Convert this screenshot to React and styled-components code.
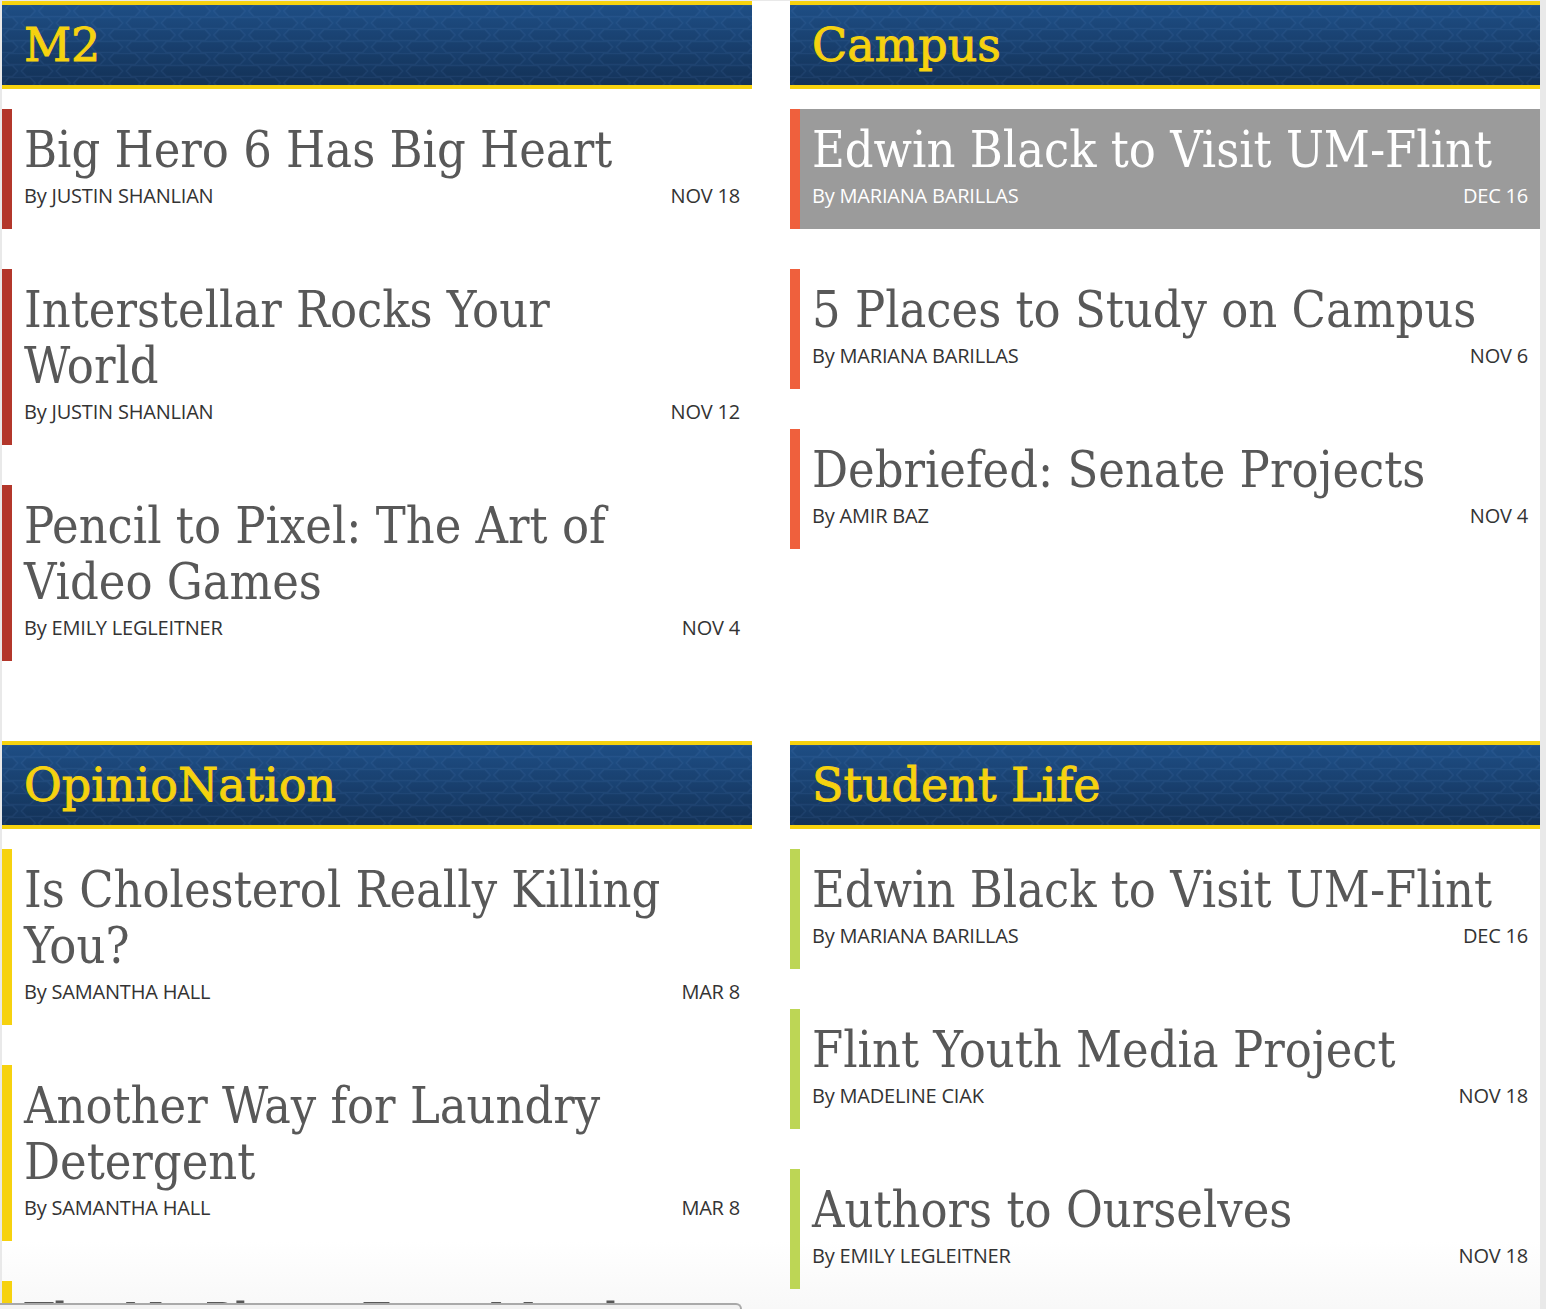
import React from "react"
import styled, { createGlobalStyle } from "styled-components"

const colors = {
  yellow: "#f6d20f",
  blueTop: "#1f518a",
  blueBottom: "#14335a",
  title: "#585858",
  meta: "#333333",
  m2: "#b3372b",
  campus: "#ef603d",
  opinion: "#f6d20f",
  life: "#bdd655",
  highlight: "#9b9b9b",
}

const GlobalStyle = createGlobalStyle`
  html, body {
    margin: 0;
    padding: 0;
    background: #e9e9e9;
  }
  body {
    font-family: "Open Sans", "Liberation Sans", sans-serif;
    overflow: hidden;
  }
`

const Page = styled.main`
  margin: 1px 6px 0 2px;
  display: grid;
  grid-template-columns: 750px 750px;
  align-content: start;
  column-gap: 38px;
  row-gap: 80px;
  background: linear-gradient(#ffffff 0, #ffffff 1240px, #f8f8f8 1308px);
`

const Section = styled.section`
  display: flex;
  flex-direction: column;
  gap: 20px;
`

const Header = styled.header`
  position: relative;
  height: 80px;
  border-top: 4px solid ${colors.yellow};
  border-bottom: 4px solid ${colors.yellow};
  background: linear-gradient(${colors.blueTop}, ${colors.blueBottom});
  display: flex;
  align-items: center;
  padding-left: 22px;
  overflow: hidden;
`

const Pattern = styled.svg`
  position: absolute;
  inset: 0;
  width: 100%;
  height: 100%;
`

const HeaderTitle = styled.h2`
  position: relative;
  margin: 0;
  font-family: "DejaVu Serif", "Liberation Serif", serif;
  font-weight: normal;
  font-size: 46px;
  line-height: 1;
  color: ${colors.yellow};
  -webkit-text-stroke: 0.9px ${colors.yellow};
`

const List = styled.div`
  display: flex;
  flex-direction: column;
  gap: 40px;
`

const Item = styled.article`
  border-left: 10px solid ${(p) => p.$accent};
  background: ${(p) => (p.$active ? colors.highlight : "transparent")};
  padding: 13px 12px 21px 12px;
`

const Title = styled.h3`
  margin: 0;
  white-space: pre-line;
  font-family: "DejaVu Serif", "Liberation Serif", serif;
  font-weight: normal;
  font-stretch: condensed;
  font-size: 50px;
  line-height: 56px;
  color: ${(p) => (p.$active ? "#ffffff" : colors.title)};
`

const Meta = styled.div`
  margin-top: 6px;
  display: flex;
  justify-content: space-between;
  font-family: "Open Sans", "Liberation Sans", sans-serif;
  font-size: 20px;
  line-height: 24px;
  letter-spacing: -0.2px;
  color: ${(p) => (p.$active ? "#ffffff" : colors.meta)};
`

const StatusBar = styled.div`
  position: fixed;
  left: 0;
  bottom: 0;
  width: 740px;
  height: 4px;
  background: #f2f2f2;
  border-top: 2px solid #a9a9a9;
  border-right: 2px solid #a9a9a9;
  border-top-right-radius: 6px;
`

const sections = [
  {
    name: "M2",
    accent: colors.m2,
    items: [
      { title: "Big Hero 6 Has Big Heart", author: "JUSTIN SHANLIAN", date: "NOV 18" },
      { title: "Interstellar Rocks Your\nWorld", author: "JUSTIN SHANLIAN", date: "NOV 12" },
      { title: "Pencil to Pixel: The Art of\nVideo Games", author: "EMILY LEGLEITNER", date: "NOV 4" },
    ],
  },
  {
    name: "Campus",
    accent: colors.campus,
    items: [
      { title: "Edwin Black to Visit UM-Flint", author: "MARIANA BARILLAS", date: "DEC 16", active: true },
      { title: "5 Places to Study on Campus", author: "MARIANA BARILLAS", date: "NOV 6" },
      { title: "Debriefed: Senate Projects", author: "AMIR BAZ", date: "NOV 4" },
    ],
  },
  {
    name: "OpinioNation",
    accent: colors.opinion,
    items: [
      { title: "Is Cholesterol Really Killing\nYou?", author: "SAMANTHA HALL", date: "MAR 8" },
      { title: "Another Way for Laundry\nDetergent", author: "SAMANTHA HALL", date: "MAR 8" },
      { title: "The No Phone Zone Mandate", author: "SAMANTHA HALL", date: "MAR 8" },
    ],
  },
  {
    name: "Student Life",
    accent: colors.life,
    items: [
      { title: "Edwin Black to Visit UM-Flint", author: "MARIANA BARILLAS", date: "DEC 16" },
      { title: "Flint Youth Media Project", author: "MADELINE CIAK", date: "NOV 18" },
      { title: "Authors to Ourselves", author: "EMILY LEGLEITNER", date: "NOV 18" },
    ],
  },
]

// flat honeycomb behind the section titles, 35px wide cells staggered every 12px
const HexPattern = ({ id }) => (
  <Pattern aria-hidden="true">
    <defs>
      <pattern id={id} width="35" height="24" patternUnits="userSpaceOnUse">
        <path
          d="M2 6 L7 0.5 H28 L33 6 L28 11.5 H7 Z M-15.5 18 L-10.5 12.5 H10.5 L15.5 18 L10.5 23.5 H-10.5 Z M19.5 18 L24.5 12.5 H45.5 L50.5 18 L45.5 23.5 H24.5 Z"
          fill="rgba(0,0,0,0.04)"
          stroke="rgba(110,160,225,0.09)"
          strokeWidth="1.6"
        />
      </pattern>
    </defs>
    <rect width="100%" height="100%" fill={`url(#${id})`} />
  </Pattern>
)

const App = () => {
  return (
    <>
      <GlobalStyle />
      <Page>
        {sections.map((section, i) => (
          <Section key={section.name}>
            <Header>
              <HexPattern id={`hex-${i}`} />
              <HeaderTitle>{section.name}</HeaderTitle>
            </Header>
            <List>
              {section.items.map((item) => (
                <Item key={item.title} $accent={section.accent} $active={item.active}>
                  <Title $active={item.active}>{item.title}</Title>
                  <Meta $active={item.active}>
                    <span>By {item.author}</span>
                    <span>{item.date}</span>
                  </Meta>
                </Item>
              ))}
            </List>
          </Section>
        ))}
      </Page>
      <StatusBar />
    </>
  )
}

export default App
